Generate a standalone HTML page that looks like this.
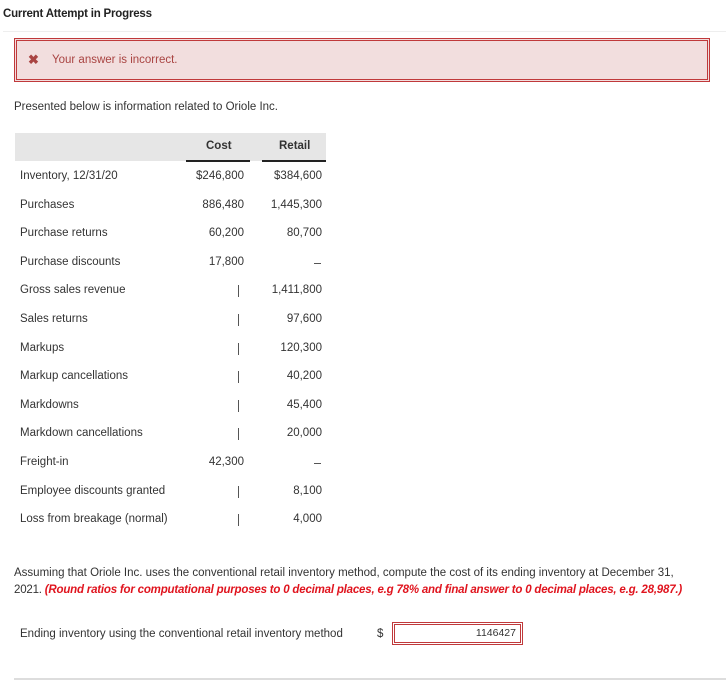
<!DOCTYPE html>
<html><head><style>
body{margin:0;width:726px;height:680px;background:#fff;font-family:"Liberation Sans",sans-serif;color:#333;position:relative;overflow:hidden;font-size:11.5px}
.a{position:absolute;white-space:nowrap}
.r{text-align:right}
</style></head><body>
<div class="a" style="left:3px;top:8px;font-size:11.5px;font-weight:bold;color:#222;letter-spacing:-0.2px">Current Attempt in Progress</div>
<div class="a" style="left:3px;top:31px;width:723px;height:1px;background:#eee"></div>
<div class="a" style="left:14px;top:38px;width:690px;height:38px;border:3px double #c0393b;background:#f2dede"></div>
<div class="a" style="left:28px;top:52px;color:#a94442;font-size:13px;font-weight:bold">✖</div>
<div class="a" style="left:52px;top:54px;color:#a94442">Your answer is incorrect.</div>
<div class="a" style="left:14px;top:101px">Presented below is information related to Oriole Inc.</div>
<div class="a" style="left:15px;top:133px;width:311px;height:28px;background:#e6e6e6"></div>
<div class="a" style="left:186px;top:160px;width:64px;height:2px;background:#222"></div>
<div class="a" style="left:262px;top:160px;width:64px;height:2px;background:#222"></div>
<div class="a" style="left:206px;top:140px;font-weight:bold">Cost</div>
<div class="a" style="left:279px;top:140px;font-weight:bold">Retail</div>
<div id="rows"></div>
<script>
var d=[["Inventory, 12/31/20","$246,800","$384,600"],["Purchases","886,480","1,445,300"],["Purchase returns","60,200","80,700"],["Purchase discounts","17,800","—"],["Gross sales revenue","—","1,411,800"],["Sales returns","—","97,600"],["Markups","—","120,300"],["Markup cancellations","—","40,200"],["Markdowns","—","45,400"],["Markdown cancellations","—","20,000"],["Freight-in","42,300","—"],["Employee discounts granted","—","8,100"],["Loss from breakage (normal)","—","4,000"]];
var h="";d.forEach(function(r,i){var y=170+i*28.6;
var c=r[1]=="—"?'<div class="a" style="left:238px;top:'+(y+1)+'px;width:1px;height:12px;background:#555"></div>':'<div class="a r" style="left:180px;width:64px;top:'+y+'px">'+r[1]+'</div>';
var t=r[2]=="—"?'<div class="a" style="left:314px;top:'+(y+7)+'px;width:7px;height:1px;background:#555"></div>':'<div class="a r" style="left:250px;width:72px;top:'+y+'px">'+r[2]+'</div>';
h+='<div class="a" style="left:20px;top:'+y+'px">'+r[0]+'</div>'+c+t;});
document.getElementById("rows").innerHTML=h;
</script>
<div class="a" style="left:14px;top:567px">Assuming that Oriole Inc. uses the conventional retail inventory method, compute the cost of its ending inventory at December 31,</div>
<div class="a" style="left:14px;top:584px;letter-spacing:-0.2px">2021. <b style="color:#e0141e;font-style:italic">(Round ratios for computational purposes to 0 decimal places, e.g 78% and final answer to 0 decimal places, e.g. 28,987.)</b></div>
<div class="a" style="left:20px;top:628px">Ending inventory using the conventional retail inventory method</div>
<div class="a" style="left:377px;top:628px">$</div>
<div class="a r" style="left:392px;top:622px;width:121px;height:17px;border:3px double #c0393b;padding-right:4px;line-height:17px;font-size:10.5px">1146427</div>
<div class="a" style="left:14px;top:678px;width:712px;height:2px;background:#ddd"></div>
</body></html>
